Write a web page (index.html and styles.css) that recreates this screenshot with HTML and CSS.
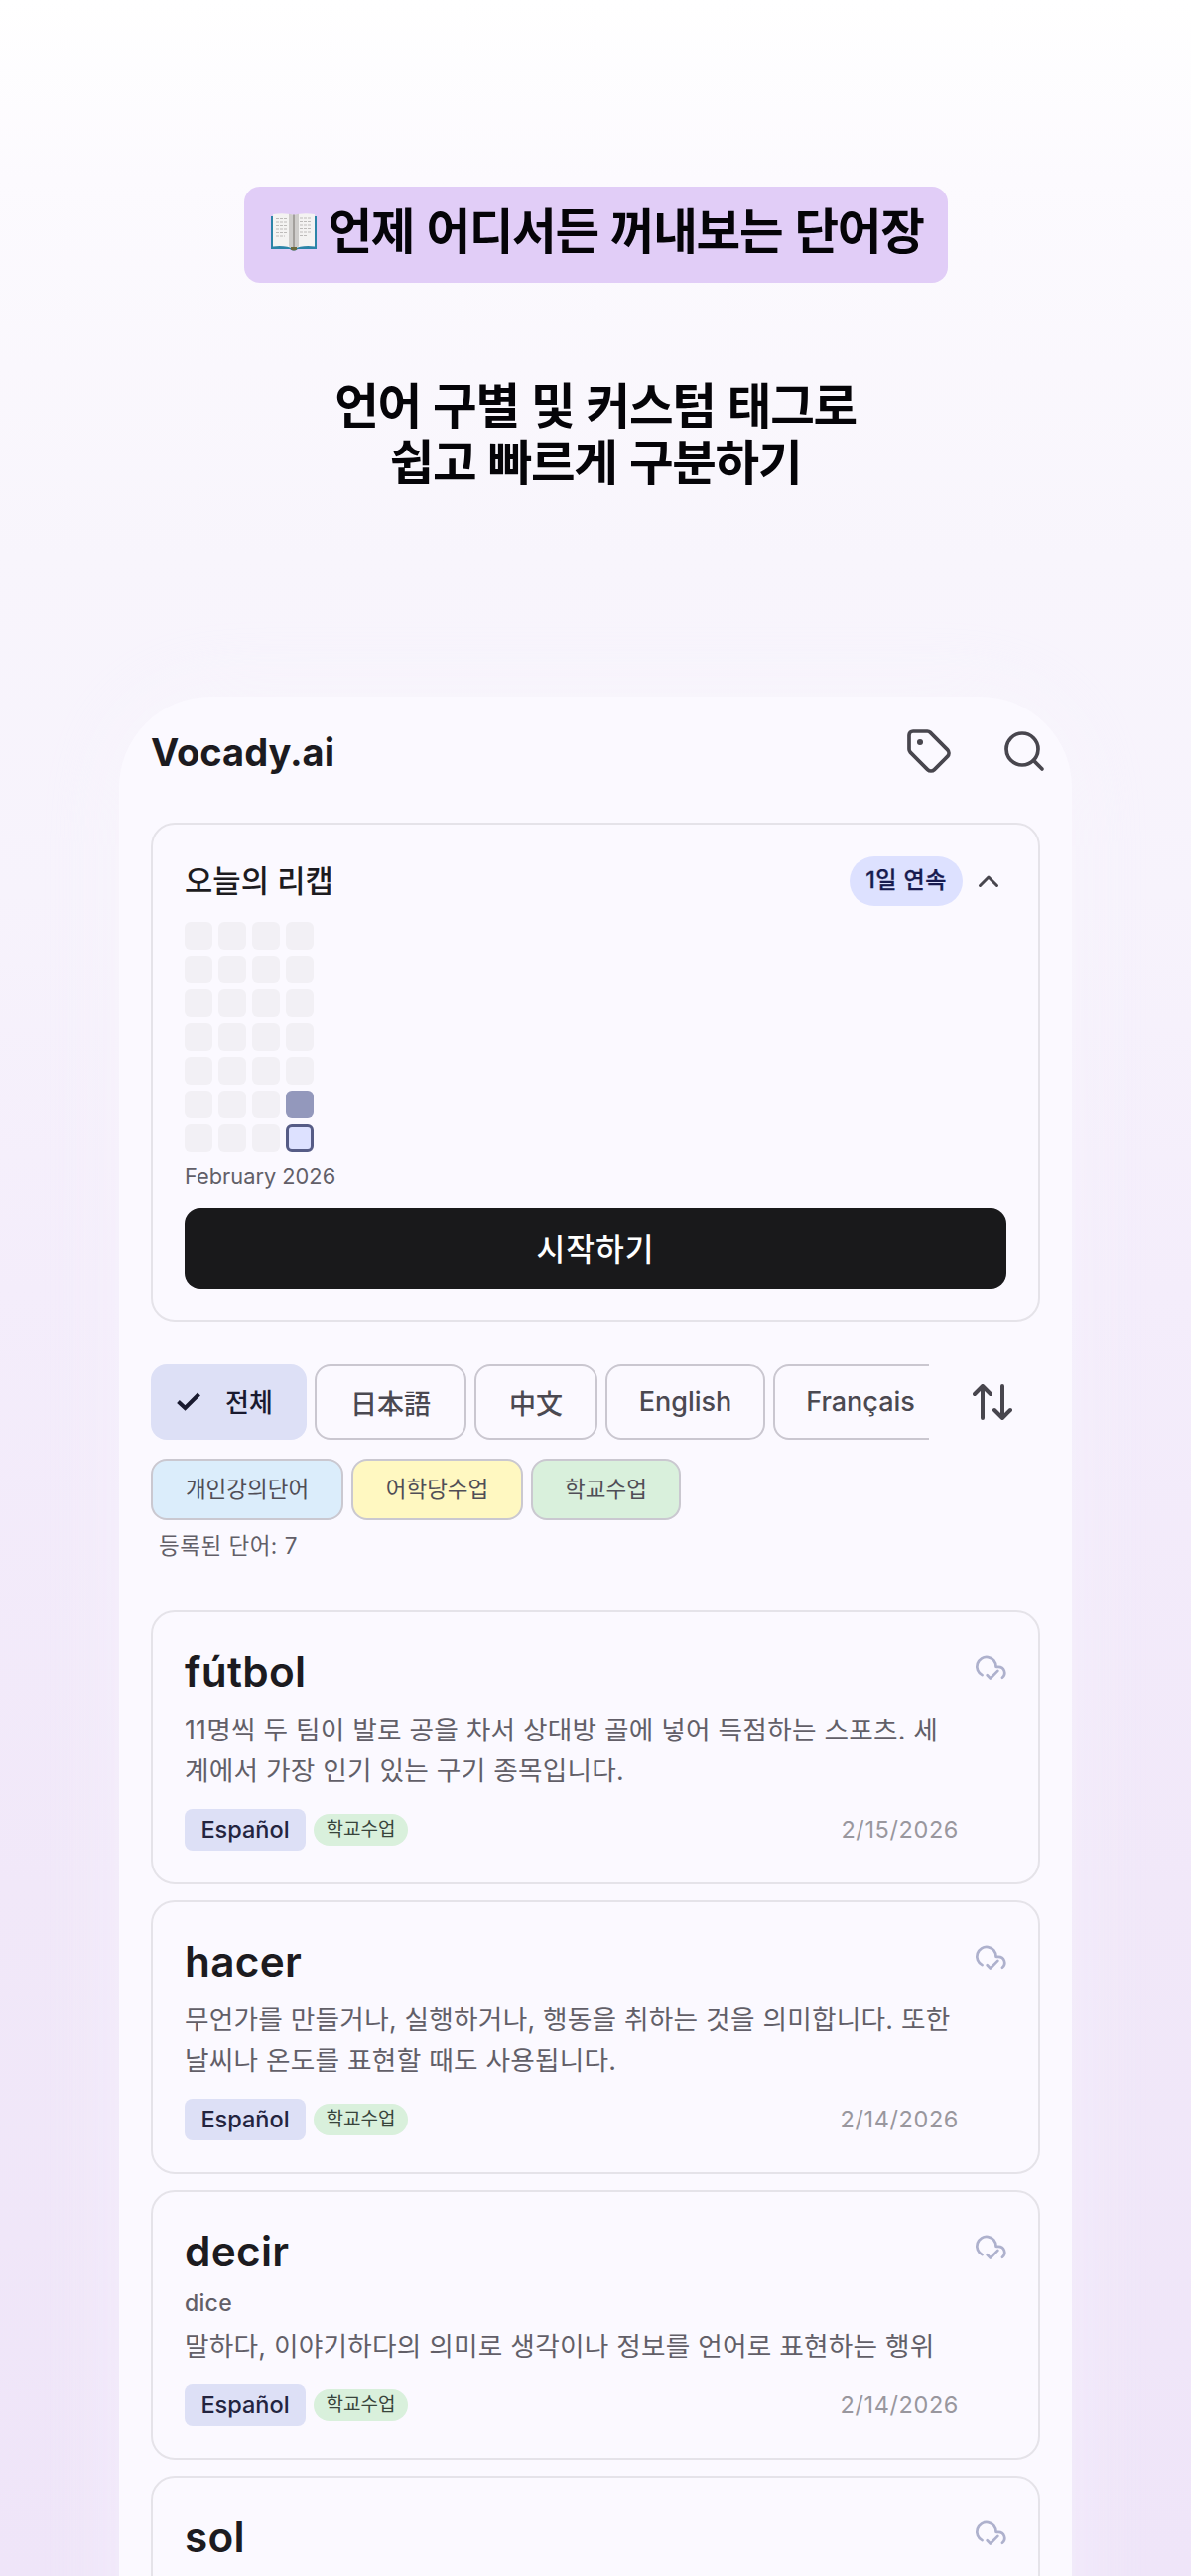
FILE: index.html
```html
<!DOCTYPE html>
<html lang="ko">
<head>
<meta charset="utf-8">
<title>Vocady.ai</title>
<link rel="stylesheet" href="styles.css">
</head>
<body>
<svg class="sprite" aria-hidden="true">
  <symbol id="cloud" viewBox="0 0 24 24"><path d="M5.5 16.1A7 7 0 1 1 15.7 10h1.8a4.5 4.500 0 0 1 2.800 8"/><path d="m17 13-5.500 5.500L9.200 16.200"/></symbol>
</svg>
<main class="poster">
  <header class="promo">
    <h1 class="banner">
      <svg class="book" viewBox="0 0 48 38">
        <path d="M1 3h46v33H28q-4 3-8 0H1z" fill="#2b84a8"/>
        <path d="M3 1Q15-1 24 2Q33-1 45 1V33.500Q32 32 24 36Q16 32 3 33.500z" fill="#f4f3f2"/>
        <path d="M19 .8Q22 1 24 2Q26 1 29 .8V33.500Q26 34 24 36Q22 34 19 33.500z" fill="#cfcdcb"/>
        <path d="M24 2v34" stroke="#8c8783" stroke-width="1.300"/>
        <path d="M6 5.500h12M6 9h12M6 12.500h12M6 16h12M6 19.500h12M6 23h9M30 5h12M30 8.500h12M30 12h12M30 15.500h12M30 19h12M30 22.500h8" stroke="#bdbbb9" stroke-width="1.200" stroke-dasharray="3 1" stroke-linecap="butt"/>
        <path d="M21 34h6v2.500q-3 2-6 0z" fill="#6d6a3c"/>
      </svg>
      <span>언제 어디서든 꺼내보는 단어장</span>
    </h1>
    <p class="tagline">언어 구별 및 커스텀 태그로<br>쉽고 빠르게 구분하기</p>
  </header>

  <section class="phone">
    <div class="appbar">
      <h2 class="brand">Vocady.ai</h2>
      <div class="actions">
        <svg viewBox="0 0 24 24"><path d="M12.586 2.586A2 2 0 0 0 11.172 2H4a2 2 0 0 0-2 2v7.172a2 2 0 0 0 .586 1.414l8.704 8.704a2.426 2.426 0 0 0 3.420 0l6.580-6.580a2.426 2.426 0 0 0 0-3.420z"/><circle cx="7.500" cy="7.500" r=".6" fill="currentColor"/></svg>
        <svg viewBox="0 0 24 24"><circle cx="11" cy="11" r="8"/><path d="m21 21-4.300-4.300"/></svg>
      </div>
    </div>

    <section class="recap">
      <div class="recap-head">
        <h3>오늘의 리캡</h3>
        <span class="streak">1일 연속</span>
        <svg class="chevron" viewBox="0 0 24 14"><path d="m3.500 11.500 8.500-8.500 8.500 8.500"/></svg>
      </div>
      <div class="heat">
        <i></i><i></i><i></i><i></i><i></i><i></i><i></i>
        <i></i><i></i><i></i><i></i><i></i><i></i><i></i>
        <i></i><i></i><i></i><i></i><i></i><i></i><i></i>
        <i></i><i></i><i></i><i></i><i></i><i class="done"></i><i class="today"></i>
      </div>
      <p class="month">February 2026</p>
      <button class="start">시작하기</button>
    </section>

    <div class="filters">
      <div class="langs">
        <span class="chip all"><svg viewBox="0 0 26 20"><path d="m2.500 10.500 7 6.500L23.500 3"/></svg>전체</span>
        <span class="chip ja">日本語</span>
        <span class="chip zh">中文</span>
        <span class="chip en">English</span>
        <span class="chip fr">Français</span>
      </div>
      <svg class="sort" viewBox="0 0 40 36"><path d="M10 34V2M2 10l8-8 8 8M30 2v32M22 26l8 8 8-8"/></svg>
    </div>
    <div class="tags">
      <span class="tag blue">개인강의단어</span>
      <span class="tag yellow">어학당수업</span>
      <span class="tag green">학교수업</span>
    </div>
    <p class="count">등록된 단어: 7</p>

    <div class="words">
      <article class="word">
        <h3>fútbol</h3><svg class="cloud"><use href="#cloud"/></svg>
        <p class="meaning">11명씩 두 팀이 발로 공을 차서 상대방 골에 넣어 득점하는 스포츠. 세<br>계에서 가장 인기 있는 구기 종목입니다.</p>
        <div class="meta"><span class="lang">Español</span><span class="label">학교수업</span><time>2/15/2026</time></div>
      </article>
      <article class="word">
        <h3>hacer</h3><svg class="cloud"><use href="#cloud"/></svg>
        <p class="meaning">무언가를 만들거나, 실행하거나, 행동을 취하는 것을 의미합니다. 또한<br>날씨나 온도를 표현할 때도 사용됩니다.</p>
        <div class="meta"><span class="lang">Español</span><span class="label">학교수업</span><time>2/14/2026</time></div>
      </article>
      <article class="word short">
        <h3>decir</h3><svg class="cloud"><use href="#cloud"/></svg>
        <p class="reading">dice</p>
        <p class="meaning">말하다, 이야기하다의 의미로 생각이나 정보를 언어로 표현하는 행위</p>
        <div class="meta"><span class="lang">Español</span><span class="label">학교수업</span><time>2/14/2026</time></div>
      </article>
      <article class="word">
        <h3>sol</h3><svg class="cloud"><use href="#cloud"/></svg>
      </article>
    </div>
  </section>
</main>
</body>
</html>
```
FILE: styles.css
```css
* { box-sizing: border-box; margin: 0; padding: 0; }
body { font-family: Inter, "Noto Sans CJK KR", sans-serif; color: #1c1b20; }
svg { display: block; fill: none; stroke-linecap: round; stroke-linejoin: round; flex: none; }
.sprite { position: absolute; width: 0; height: 0; }

.poster {
  width: 1200px; height: 2596px; overflow: hidden;
  display: flex; flex-direction: column; align-items: center;
  background: linear-gradient(#fff 0, #fcfafe 180px, #f8f5fc 560px, #f7f3fc 900px, #f4edfb 1300px, #f1e8f9 1900px, #efe5f9 2596px);
}

/* promo copy */
.promo { width: 100%; height: 702px; padding-top: 188px; display: flex; flex-direction: column; align-items: center; flex: none; }
.banner {
  width: 709px; height: 97px; border-radius: 16px; background: #e1cdf7; color: #050408;
  display: flex; align-items: flex-start; padding: 6px 0 0 26px; white-space: nowrap;
  font: 700 48.500px/72px "Noto Sans CJK KR", sans-serif; letter-spacing: -1.300px;
}
.book { width: 48px; height: 38px; margin: 21px 11px 0 0; }
.tagline { margin-top: 93px; text-align: center; color: #050408; font: 700 48.500px/57px "Noto Sans CJK KR", sans-serif; letter-spacing: -1.300px; }

/* app panel */
.phone { width: 960px; flex: 1; padding: 0 32px; border-radius: 92px 92px 0 0; background: #fbf9ff; box-shadow: 0 0 90px 10px rgba(250, 248, 255, .4); }
.appbar { height: 127px; padding-top: 31px; display: flex; justify-content: space-between; color: #1c1b20; }
.brand { font-size: 38px; line-height: 51px; font-weight: 700; }
.actions { display: flex; gap: 48px; margin-right: -8px; padding-right: -8px; color: #48464e; }
.actions svg { width: 48px; height: 48px; stroke: currentColor; stroke-width: 1.850; }

.recap { height: 503px; border: 2px solid #e5e3e9; border-radius: 24px; padding: 31px 32px; }
.recap-head { display: flex; align-items: center; height: 51px; }
.recap-head h3 { flex: 1; font-size: 30.800px; font-weight: 500; line-height: 51px; }
.streak { width: 114px; height: 50px; border-radius: 25px; background: #dde1ff; color: #171b4f; text-align: center; font-size: 23px; line-height: 49px; font-weight: 500; letter-spacing: .5px; -webkit-text-stroke: .3px #171b4f; }
.chevron { width: 24px; height: 14px; margin: 0 6px 0 14px; stroke: #48464e; stroke-width: 3; }
.heat { margin-top: 16px; display: grid; grid-template-rows: repeat(7, 28px); grid-auto-flow: column; grid-auto-columns: 28px; gap: 6px; }
.heat i { border-radius: 6px; background: #f2f0f5; }
.heat .done { background: #9398bc; }
.heat .today { background: #dde1ff; border: 3px solid #565c86; }
.month { margin-top: 8px; font-size: 21.800px; line-height: 32px; color: #625f68; }
.start { display: block; width: 828px; height: 82px; margin-top: 16px; border: 0; border-radius: 16px; background: #19191b; color: #fff; font: 500 31.300px/80px "Noto Sans CJK KR", sans-serif; letter-spacing: 1px; }

/* filters */
.filters { margin-top: 43px; display: flex; align-items: center; gap: 44px; }
.langs { width: 784px; display: flex; gap: 8px; overflow: hidden; }
.chip { flex: none; height: 76px; border: 2px solid #cac7d0; border-radius: 16px; display: flex; align-items: center; justify-content: center; font-size: 27px; font-weight: 500; color: #4b4951; }
.all { width: 157px; border: 0; padding: 0 0 3px 25px; justify-content: flex-start; background: #dde0f6; color: #191a2f; gap: 24px; font-size: 26px; }
.all svg { width: 26px; height: 20px; stroke: #191a2f; stroke-width: 4; stroke-linecap: butt; stroke-linejoin: miter; }
.ja { width: 153px; font-family: "Noto Sans CJK JP", sans-serif; }
.zh { width: 124px; font-family: "Noto Sans CJK SC", sans-serif; }
.en { width: 161px; padding-bottom: 1px; }
.fr { width: 176px; padding-bottom: 1px; }
.sort { width: 40px; height: 36px; stroke: #48464e; stroke-width: 4; }
.tags { margin-top: 19px; display: flex; gap: 8px; }
.tag { height: 62px; border: 2px solid #cac8d0; border-radius: 16px; text-align: center; font-size: 22.500px; line-height: 58px; color: #504e56; }
.blue { width: 194px; background: #dbedfb; }
.yellow { width: 173px; background: #fff8c1; }
.green { width: 151px; background: #d9f0dc; }
.count { padding: 9px 0 0 8px; font-size: 22.500px; line-height: 34px; height: 91px; color: #625f68; letter-spacing: .5px; }

/* word list */
.words { display: flex; flex-direction: column; gap: 16px; }
.word { height: 276px; padding: 35px 32px 0; border: 2px solid #e5e3e9; border-radius: 24px; display: grid; grid-template-columns: 1fr 32px; align-content: start; }
.word.short { height: 272px; }
.word h3 { font-size: 42.300px; line-height: 50px; font-weight: 600; letter-spacing: .3px; }
.cloud { width: 33px; height: 33px; margin-top: 6px; stroke: #aeb1cd; stroke-width: 2; }
.meaning { grid-column: 1 / -1; font-size: 26.700px; line-height: 41.500px; color: #625f68; white-space: nowrap; padding-top: 12.500px; letter-spacing: .22px; }
.reading { grid-column: 1 / -1; font-size: 23px; line-height: 34px; font-weight: 500; color: #625f68; padding-top: 10px; letter-spacing: .3px; }
.short .meaning { padding-top: 6px; }
.meta { grid-column: 1 / -1; display: flex; align-items: center; margin-top: 17px; height: 42px; }
.lang { width: 122px; height: 42px; border-radius: 8px; background: #dde0f6; color: #23243f; text-align: center; font-size: 23.500px; line-height: 42px; font-weight: 500; }
.label { width: 95px; height: 32px; margin-left: 8px; border-radius: 16px; background: #d9f0dc; color: #38443b; text-align: center; font-size: 19px; line-height: 31px; }
.meta time { margin: 0 48px 0 auto; font-size: 23.500px; letter-spacing: .6px; color: #99979e; }
```
